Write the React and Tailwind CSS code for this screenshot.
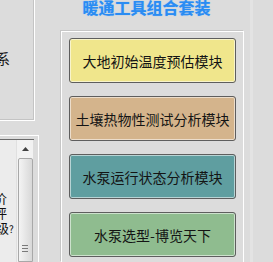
export default function App() {
  const font = { fontFamily: '"Noto Sans CJK SC", "Noto Sans", sans-serif' };
  const buttons = [
    { label: "大地初始温度预估模块", bg: "bg-[#f0e68c]" },
    { label: "土壤热物性测试分析模块", bg: "bg-[#d4b48c]" },
    { label: "水泵运行状态分析模块", bg: "bg-[#5f9ea0]" },
    { label: "水泵选型-博览天下", bg: "bg-[#8fbc8f]" },
  ];
  return (
    <div
      className="w-[273px] h-[262px] bg-[#dcdcdc] overflow-hidden flex text-[#111]"
      style={font}
    >
      {/* left column */}
      <div className="w-[39px] shrink-0 flex flex-col">
        <div className="w-[35px] h-[121px] shrink-0 border-r border-b border-white shadow-[inset_-1px_-1px_0_#c4c4c4] overflow-hidden">
          <div className="pt-[50px] ml-[-4px] text-[14px] leading-[16px] whitespace-nowrap">系</div>
        </div>
        <div className="h-[14px] shrink-0" />
        <div className="flex-1 w-[39px] border-t border-r border-white pt-[3px]">
          <div className="w-[34px] h-full border-t border-[#6a6a6a] flex">
            <div className="w-[16px] h-full bg-[#ececec] overflow-hidden pt-[50px] text-[13px] leading-[15px] whitespace-nowrap">
              <div className="ml-[-6px]">价</div>
              <div className="ml-[-6px]">评</div>
              <div className="ml-[-4px]">级<span className="text-[10px]">?</span></div>
            </div>
            <div className="w-[17px] h-full bg-[#f2f2f2] border-l border-[#e0e0e0] flex flex-col items-center">
              <div className="h-[18px] w-full flex items-center justify-center">
                <svg width="7" height="4" viewBox="0 0 7 4">
                  <path d="M3.5 0 L7 4 L0 4 Z" fill="#404040" />
                </svg>
              </div>
              <div className="flex-1 w-[15px] rounded-t-[2px] border border-[#a8a8a8] bg-gradient-to-r from-[#f4f4f4] via-[#e6e6e6] to-[#d8d8d8] flex flex-col items-center pt-[86px] gap-[2px]">
                <div className="w-[6px] h-px bg-[#7a7a7a]" />
                <div className="w-[6px] h-px bg-[#7a7a7a]" />
                <div className="w-[6px] h-px bg-[#7a7a7a]" />
              </div>
            </div>
          </div>
        </div>
      </div>

      {/* right column */}
      <div className="ml-[22px] w-[183px] shrink-0 flex flex-col">
        <div className="h-[31px] shrink-0 flex justify-center pr-[12px]">
          <div className="mt-[-1px] text-[16px] leading-[16px] font-bold text-[#2a8cf2] whitespace-nowrap [text-shadow:0_0_1px_#6ab0ff]">
            暖通工具组合套装
          </div>
        </div>
        <div className="flex-1 border-t border-l border-r border-white shadow-[-1px_-1px_0_#c6c6c6] pt-[6px] px-[7px] flex flex-col gap-[13px]">
          {buttons.map((b) => (
            <div
              key={b.label}
              className={`h-[45px] shrink-0 rounded-[3px] border border-[#5e5e5e] shadow-[inset_0_0_0_1px_rgba(255,255,255,0.55)] ${b.bg} flex items-center justify-center text-[14px] leading-none text-[#141414] whitespace-nowrap`}
            >
              {b.label}
            </div>
          ))}
        </div>
      </div>

      {/* right strip */}
      <div className="flex-1 flex">
        <div className="w-[6px]" />
        <div className="w-[3px] h-full bg-[#e3e3e3]" />
      </div>
    </div>
  );
}
